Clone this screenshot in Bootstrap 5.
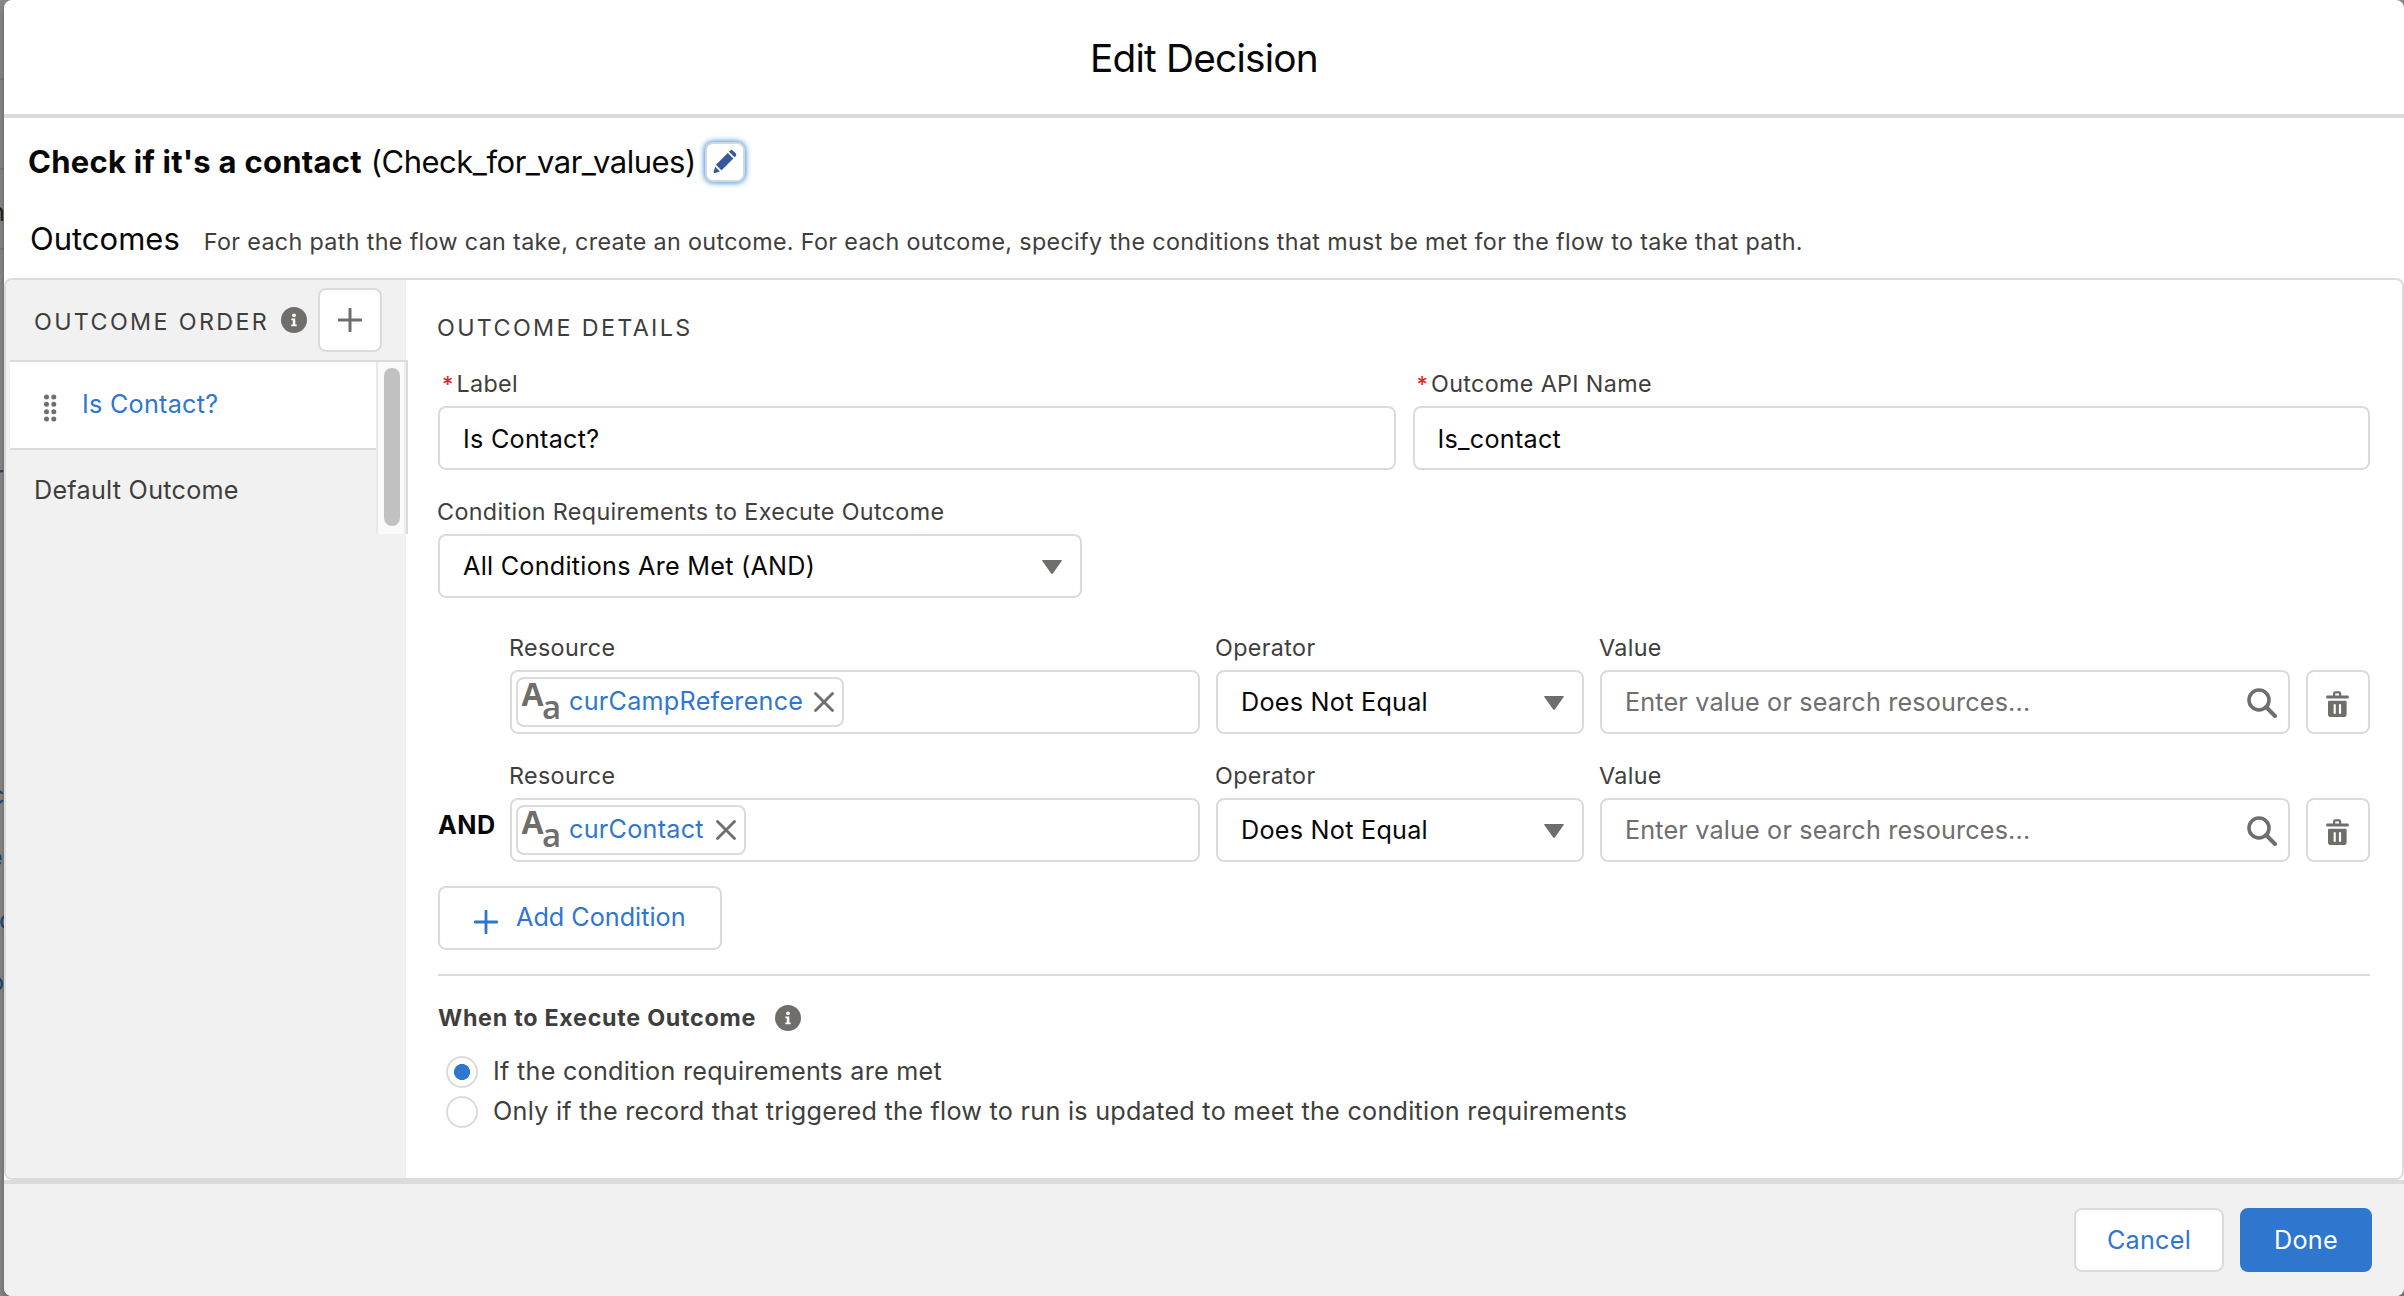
<!DOCTYPE html>
<html lang="en">
<head>
    <meta charset="UTF-8">
    <meta name="viewport" content="width=device-width, initial-scale=1.0">
    <title>Edit Decision</title>
    <link href="https://cdn.jsdelivr.net/npm/bootstrap@5.3.0/dist/css/bootstrap.min.css" rel="stylesheet">
    <style>
        :root {
            --line: #dddbda;
            --soft: #f1f1f1;
            --brand: #2f76cf;
            --icon: #706e6b;
            --label: #3e3e3c;
        }
        body {
            font-family: Inter, "Liberation Sans", sans-serif;
            font-size: 25.2px;
            letter-spacing: .25px;
            color: #080707;
            background: #8a8886;
            height: 100vh;
            overflow: hidden;
        }
        svg { flex: none; display: block; }

        /* sliver of the page behind the dialog */
        .backdrop-strip {
            position: absolute;
            inset: 0 auto 0 0;
            width: 4px;
            overflow: hidden;
            color: #1f4577;
            line-height: 30px;
        }
        .backdrop-strip span, .backdrop-strip i { position: absolute; }
        .backdrop-strip i { left: 0; width: 4px; height: 2px; background: #7b7977; }

        .dialog {
            margin-left: 4px;
            height: 1296px;
            border-radius: 8px;
            box-shadow: 0 4px 6px rgba(0, 0, 0, .3);
        }
        .dialog-head {
            height: 118px;
            padding-top: 2px;
            border-bottom: 4px solid var(--line);
        }
        .dialog-title { font-size: 38.8px; letter-spacing: -.8px; }
        .name-row { height: 88px; padding-left: 24px; font-size: 31px; white-space: pre; }
        .name-row strong { letter-spacing: .25px; }
        .name-row .api { letter-spacing: -.5px; }
        .edit-btn {
            width: 40px;
            height: 40px;
            margin-left: 9px;
            border: 2px solid #d3d8e0;
            border-radius: 8px;
            box-shadow: 0 0 6px #0070d2;
        }
        .intro-row { height: 72px; padding-left: 26px; }
        .intro-title { font-size: 31px; line-height: 65px; letter-spacing: 0; }
        .intro-text { font-size: 23.3px; letter-spacing: .343px; color: var(--label); margin-left: 24px; }

        .panel { height: 902px; border: 2px solid var(--line); border-radius: 8px; }
        .side { width: 400px; background: var(--soft); border-radius: 6px 0 0 6px; flex: none; }
        .side-head { height: 80px; padding-left: 28px; }
        .caps { font-size: 23.3px; letter-spacing: 2.35px; color: var(--label); line-height: 40px; }
        .btn-box {
            width: 64px;
            height: 64px;
            padding: 0;
            border: 2px solid var(--line);
            border-radius: 8px;
            background: #fff;
        }
        .side-list { margin-left: 4px; height: 174px; border-top: 2px solid var(--line); width: 398px; }
        .side-item { height: 88px; border-bottom: 2px solid var(--line); background: #fff; padding-left: 34px; color: var(--brand); }
        .side-default { height: 82px; padding-left: 24px; color: var(--label); }
        .track {
            width: 32px;
            padding: 6px 0 8px 6px;
            background: #fafafa;
            border-left: 2px solid #e8e8e8;
            border-right: 2px solid var(--line);
            box-shadow: inset -2px 0 #ededed;
        }
        .thumb { width: 16px; height: 158px; border-radius: 8px; background: #c1c1c1; }

        .details { padding: 28px 32px 0; }
        .details .caps { margin-left: -1px; }
        .field-label { font-size: 23.3px; letter-spacing: .36px; height: 36px; line-height: 35px; margin: 0 0 4px -1px; color: var(--label); display: block; }
        .req { color: #d92b2b; margin: 0 3px 0 5px; letter-spacing: 0; font-size: 22px; font-weight: 500; line-height: 1; }
        .box {
            height: 64px;
            border: 2px solid var(--line);
            border-radius: 8px;
            padding: 1px 24px 0 23px;
            font-size: 25.2px;
            letter-spacing: .25px;
            color: #080707;
            background: #fff;
            display: flex;
            align-items: center;
        }
        .and-word { width: 72px; height: 64px; line-height: 54px; font-weight: 700; letter-spacing: .5px; flex: none; }
        .w-resource { width: 690px; }
        .w-operator { width: 368px; }
        .w-value { width: 690px; }
        .pill { height: 50px; border: 2px solid var(--line); border-radius: 8px; padding: 0 8px 0 4px; color: var(--brand); }
        .pill svg:first-child { margin-right: 10px; }
        .pill text { font-family: "Open Sans", sans-serif; fill: var(--icon); letter-spacing: 0; }
        .resource-box { padding: 0 4px; }
        .add-btn { width: 284px; height: 64px; border: 2px solid var(--line); border-radius: 8px; background: #fff; color: var(--brand); padding: 0 0 0 34px; }
        .rule { height: 2px; background: var(--line); margin: 24px 0; }
        .when { font-size: 23.3px; font-weight: 700; letter-spacing: .72px; line-height: 36px; height: 36px; color: var(--label); }
        .radio-row { height: 40px; padding-left: 8px; color: var(--label); }
        .radio-row .form-check-input { width: 32px; height: 32px; margin: 0 15px 0 0; border: 2px solid var(--line); float: none; }
        .radio-row .form-check-input:checked {
            background: radial-gradient(circle, var(--brand) 7.7px, #fff 8.3px);
        }
        .radio-row label { line-height: 38px; padding-bottom: 2px; letter-spacing: .265px; }

        .dialog-foot {
            height: 116px;
            border-top: 4px solid var(--line);
            background: var(--soft);
            border-radius: 0 0 8px 8px;
            padding-right: 32px;
            gap: 16px;
        }
        .foot-btn { height: 64px; border-radius: 8px; border: 2px solid var(--line); font-size: 25.2px; padding: 2px 0 0; background: #fff; color: var(--brand); letter-spacing: .27px; }
        .foot-btn.done { background: var(--brand); border-color: var(--brand); color: #fff; }
    </style>
</head>
<body>
    <!-- Shared icons -->
    <svg width="0" height="0" class="position-absolute">
        <symbol id="info" viewBox="0 0 26 26">
            <circle cx="13" cy="13" r="13" fill="#706e6b"/>
            <circle cx="13" cy="8.3" r="1.9" fill="#fff"/>
            <path d="M10.4 11.6h3.9v6h1.4v1.6h-5.4v-1.6h1.5v-4.4h-1.4z" fill="#fff"/>
        </symbol>
        <symbol id="caret" viewBox="0 0 20 14">
            <path d="M.8 0h18.4q1.2 0 .5 1L11 13.2q-1 1.2-2 0L.3 1Q-.4 0 .8 0z" fill="#706e6b"/>
        </symbol>
        <symbol id="search" viewBox="0 0 30 30">
            <circle cx="12" cy="12" r="10" fill="none" stroke="#706e6b" stroke-width="3.6"/>
            <path d="M19 19l9 9" stroke="#706e6b" stroke-width="4" stroke-linecap="round"/>
        </symbol>
        <symbol id="trash" viewBox="0 0 24 26">
            <path d="M1.2 4.4H7V2.6Q7 .2 9.4.2h3.4q2.400 0 2.400 2.400v1.800h6.600q1 0 1 1v1.200q0 1-1 1H1.200q-1 0-1-1V5.400q0-1 1-1zM9.200 4.400h3.800V2.400H9.200z" fill="#706e6b" fill-rule="evenodd"/>
            <path d="M3 9.800h16.600q1 0 1 1v12.400q0 2.800-2.800 2.800H4.800Q2 26 2 23.200V10.800q0-1 1-1zM8.700 13q-1.100 0-1.100 1v8q0 1 1.100 1t1.100-1v-8q0-1-1.100-1zM14 13q-1.100 0-1.100 1v8q0 1 1.100 1t1.100-1v-8q0-1-1.100-1z" fill="#706e6b" fill-rule="evenodd"/>
        </symbol>
        <symbol id="close" viewBox="0 0 20 20">
            <path d="M1.500 1.500l17 17M18.500 1.500l-17 17" stroke="#706e6b" stroke-width="2.800" stroke-linecap="round"/>
        </symbol>
    </svg>

    <div class="backdrop-strip">
        <i style="top: 78px"></i>
        <i style="top: 168px"></i>
        <i style="top: 248px"></i>
        <span style="top: 197px; left: -10px; color: #222">n</span>
        <span style="top: 460px; left: -6px">r</span>
        <span style="top: 780px; left: -10px">c</span>
        <span style="top: 842px; left: -12px">e</span>
        <span style="top: 905px; left: -1px">c</span>
        <span style="top: 967px; left: -11px">o</span>
    </div>

    <div class="dialog bg-white position-relative">
        <div class="dialog-head d-flex align-items-center justify-content-center">
            <div class="dialog-title">Edit Decision</div>
        </div>

        <div class="name-row d-flex align-items-center">
            <strong>Check if it's a contact</strong><span> </span><span class="api">(Check_for_var_values)</span>
            <div class="edit-btn d-flex align-items-center justify-content-center bg-white">
                <svg width="24" height="24" viewBox="0 0 24 24" fill="#37589a">
                    <path d="M3.300 14.500L14.800 3l5.600 5.600L8.900 20q-.4.400-.8 0L3.300 15.300q-.4-.4 0-.8z"/>
                    <path d="M16 1.700l1-1q1.500-1.300 3 0l2.600 2.600q1.400 1.500 0 3l-1 1z"/>
                    <path d="M2.300 16.800l4.600 4.600-5 1.600Q.3 23.300.6 21.800z"/>
                </svg>
            </div>
        </div>

        <div class="intro-row d-flex align-items-baseline">
            <div class="intro-title">Outcomes</div>
            <div class="intro-text">For each path the flow can take, create an outcome. For each outcome, specify the conditions that must be met for the flow to take that path.</div>
        </div>

        <div class="panel d-flex">
            <!-- Outcome order -->
            <div class="side">
                <div class="side-head d-flex align-items-center">
                    <div class="caps pt-1">OUTCOME ORDER</div>
                    <svg width="26" height="26" style="margin-left: 12px"><use href="#info"/></svg>
                    <button type="button" class="btn-box d-flex align-items-center justify-content-center" style="margin-left: 11px">
                        <svg width="24" height="24" viewBox="0 0 24 24"><path d="M12 1v22M1 12h22" stroke="#706e6b" stroke-width="3" stroke-linecap="round"/></svg>
                    </button>
                </div>
                <div class="side-list d-flex">
                    <div class="flex-grow-1">
                        <div class="side-item d-flex align-items-center">
                            <svg width="14" height="28" viewBox="0 0 14 28" fill="#706e6b" style="margin: 6px 24px 0 0">
                                <circle cx="2.500" cy="3" r="2.500"/><circle cx="9.800" cy="3" r="2.500"/>
                                <circle cx="2.500" cy="10.300" r="2.500"/><circle cx="9.800" cy="10.300" r="2.500"/>
                                <circle cx="2.500" cy="17.700" r="2.500"/><circle cx="9.800" cy="17.700" r="2.500"/>
                                <circle cx="2.500" cy="25" r="2.500"/><circle cx="9.800" cy="25" r="2.500"/>
                            </svg>
                            <span>Is Contact?</span>
                        </div>
                        <div class="side-default d-flex align-items-center">Default Outcome</div>
                    </div>
                    <div class="track"><div class="thumb"></div></div>
                </div>
            </div>

            <!-- Outcome details -->
            <div class="details flex-grow-1">
                <div class="caps">OUTCOME DETAILS</div>

                <div class="d-flex" style="gap: 17px; margin-top: 18px">
                    <div class="w-50">
                        <label class="field-label" for="outcomeLabel"><span class="req">*</span>Label</label>
                        <input type="text" class="box form-control" id="outcomeLabel" value="Is Contact?">
                    </div>
                    <div class="w-50">
                        <label class="field-label" for="outcomeApi"><span class="req">*</span>Outcome API Name</label>
                        <input type="text" class="box form-control" id="outcomeApi" value="Is_contact">
                    </div>
                </div>

                <div style="margin-top: 24px; width: 644px">
                    <span class="field-label">Condition Requirements to Execute Outcome</span>
                    <div class="box justify-content-between" style="padding-right: 18px">
                        All Conditions Are Met (AND)
                        <svg width="20" height="14"><use href="#caret"/></svg>
                    </div>
                </div>

                <div class="d-flex align-items-end" style="gap: 16px; margin-top: 32px">
                    <div class="d-flex align-items-end">
                        <div class="and-word"></div>
                        <div class="w-resource">
                            <span class="field-label">Resource</span>
                            <div class="box resource-box">
                                <div class="pill d-flex align-items-center">
                                    <svg width="37" height="38" viewBox="0 0 37 38">
                                        <text x="-.5" y="23" font-size="32" font-weight="700">A</text>
                                        <text x="20" y="36" font-size="33" font-weight="600">a</text>
                                    </svg>
                                    <span>curCampReference</span>
                                    <svg width="20" height="20" style="margin-left: 11px"><use href="#close"/></svg>
                                </div>
                            </div>
                        </div>
                    </div>
                    <div class="w-operator">
                        <span class="field-label">Operator</span>
                        <div class="box justify-content-between" style="padding-right: 18px">
                            Does Not Equal
                            <svg width="20" height="14"><use href="#caret"/></svg>
                        </div>
                    </div>
                    <div class="w-value">
                        <span class="field-label">Value</span>
                        <div class="box justify-content-between" style="padding-right: 11px; color: #706e6b; letter-spacing: .16px">
                            Enter value or search resources...
                            <svg width="30" height="30"><use href="#search"/></svg>
                        </div>
                    </div>
                    <button type="button" class="btn-box d-flex align-items-center justify-content-center">
                        <svg width="24" height="26" style="margin-top: 3px"><use href="#trash"/></svg>
                    </button>
                </div>

                <div class="d-flex align-items-end" style="gap: 16px; margin-top: 24px">
                    <div class="d-flex align-items-end">
                        <div class="and-word">AND</div>
                        <div class="w-resource">
                            <span class="field-label">Resource</span>
                            <div class="box resource-box">
                                <div class="pill d-flex align-items-center">
                                    <svg width="37" height="38" viewBox="0 0 37 38">
                                        <text x="-.5" y="23" font-size="32" font-weight="700">A</text>
                                        <text x="20" y="36" font-size="33" font-weight="600">a</text>
                                    </svg>
                                    <span>curContact</span>
                                    <svg width="20" height="20" style="margin-left: 12px"><use href="#close"/></svg>
                                </div>
                            </div>
                        </div>
                    </div>
                    <div class="w-operator">
                        <span class="field-label">Operator</span>
                        <div class="box justify-content-between" style="padding-right: 18px">
                            Does Not Equal
                            <svg width="20" height="14"><use href="#caret"/></svg>
                        </div>
                    </div>
                    <div class="w-value">
                        <span class="field-label">Value</span>
                        <div class="box justify-content-between" style="padding-right: 11px; color: #706e6b; letter-spacing: .16px">
                            Enter value or search resources...
                            <svg width="30" height="30"><use href="#search"/></svg>
                        </div>
                    </div>
                    <button type="button" class="btn-box d-flex align-items-center justify-content-center">
                        <svg width="24" height="26" style="margin-top: 3px"><use href="#trash"/></svg>
                    </button>
                </div>

                <button type="button" class="add-btn d-flex align-items-center" style="margin-top: 24px">
                    <svg width="24" height="24" viewBox="0 0 24 24" style="margin: 8px 18px 0 0"><path d="M12 1v22M1 12h22" stroke="#2f76cf" stroke-width="2.800" stroke-linecap="round"/></svg>
                    <span>Add Condition</span>
                </button>

                <div class="rule"></div>

                <div class="when d-flex align-items-center">
                    When to Execute Outcome
                    <svg width="26" height="26" style="margin-left: 19px"><use href="#info"/></svg>
                </div>
                <div style="margin-top: 16px">
                    <div class="radio-row d-flex align-items-center">
                        <input class="form-check-input" type="radio" name="whenToRun" id="whenMet" checked>
                        <label for="whenMet">If the condition requirements are met</label>
                    </div>
                    <div class="radio-row d-flex align-items-center">
                        <input class="form-check-input" type="radio" name="whenToRun" id="whenUpdated">
                        <label for="whenUpdated">Only if the record that triggered the flow to run is updated to meet the condition requirements</label>
                    </div>
                </div>
            </div>
        </div>

        <div class="dialog-foot d-flex align-items-center justify-content-end">
            <button type="button" class="foot-btn btn" style="width: 150px">Cancel</button>
            <button type="button" class="foot-btn btn done" style="width: 132px">Done</button>
        </div>
    </div>

    <script src="https://cdn.jsdelivr.net/npm/bootstrap@5.3.0/dist/js/bootstrap.bundle.min.js"></script>
</body>
</html>
